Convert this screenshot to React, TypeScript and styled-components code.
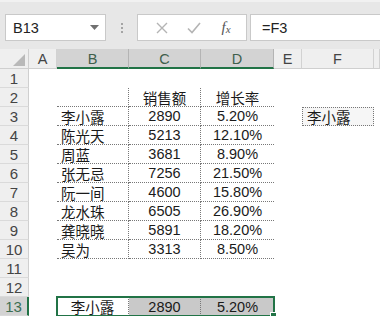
import React from "react";
import styled, { createGlobalStyle } from "styled-components";

const GlobalStyle = createGlobalStyle`
  html, body {
    margin: 0;
    padding: 0;
    background: #fff;
  }
  body {
    font-family: "Liberation Sans", "Noto Sans CJK SC", sans-serif;
    overflow: hidden;
  }
`;

type Cell = {
  text?: string;
  align?: "left" | "center";
  right?: boolean;
  bottom?: boolean;
  box?: boolean;
  shade?: boolean;
};

const names = ["李小露", "陈光天", "周蓝", "张无忌", "阮一间", "龙水珠", "龚晓晓", "吴为"];
const sales = ["2890", "5213", "3681", "7256", "4600", "6505", "5891", "3313"];
const rates = ["5.20%", "12.10%", "8.90%", "21.50%", "15.80%", "26.90%", "18.20%", "8.50%"];

const colLetters = ["A", "B", "C", "D", "E", "F", ""];
const selectedCols = ["B", "C", "D"];

const buildRows = (): Cell[][] => {
  const rows: Cell[][] = [];
  for (let r = 1; r <= 13; r++) {
    const row: Cell[] = colLetters.map(() => ({}));
    if (r === 2) {
      row[1] = { right: true, bottom: true };
      row[2] = { text: "销售额", align: "center", right: true, bottom: true };
      row[3] = { text: "增长率", align: "center", bottom: true };
    }
    if (r >= 3 && r <= 10) {
      const i = r - 3;
      row[1] = { text: names[i], align: "left", right: true, bottom: true };
      row[2] = { text: sales[i], align: "center", right: true, bottom: true };
      row[3] = { text: rates[i], align: "center", bottom: true };
    }
    if (r === 3) {
      row[5] = { text: "李小露", align: "left", box: true };
    }
    if (r === 13) {
      row[1] = { text: "李小露", align: "center", right: true };
      row[2] = { text: "2890", align: "center", right: true, shade: true };
      row[3] = { text: "5.20%", align: "center", shade: true };
    }
    rows.push(row);
  }
  return rows;
};

const App = () => {
  const rows = buildRows();

  return (
    <>
      <GlobalStyle />
      <Toolbar>
        <NameBox>
          <span>B13</span>
          <svg width="9" height="5" viewBox="0 0 9 5">
            <path d="M0 0 L9 0 L4.5 5 Z" fill="#707070" />
          </svg>
        </NameBox>
        <Grip>
          <Dot />
          <Dot />
          <Dot />
        </Grip>
        <FuncBox>
          <svg width="12" height="12" viewBox="0 0 12 12">
            <path d="M1 1 L11 11 M11 1 L1 11" stroke="#b4b4b4" strokeWidth="1.4" />
          </svg>
          <svg width="14" height="12" viewBox="0 0 14 12">
            <path d="M1 6.5 L5 10.5 L13 1" stroke="#b4b4b4" strokeWidth="1.6" fill="none" />
          </svg>
          <Fx>
            f<sub>x</sub>
          </Fx>
        </FuncBox>
        <FormulaBox>=F3</FormulaBox>
      </Toolbar>

      <Sheet>
        <Corner>
          <svg width="12" height="12" viewBox="0 0 12 12">
            <path d="M12 0 L12 12 L0 12 Z" fill="#b9b9b9" />
          </svg>
        </Corner>
        {colLetters.map((c, i) => (
          <ColHeader key={"h" + i} $selected={selectedCols.includes(c)}>
            {c}
          </ColHeader>
        ))}

        {rows.map((row, r) => (
          <React.Fragment key={r}>
            <RowHeader $selected={r === 12}>{r + 1}</RowHeader>
            {row.map((cell, c) => (
              <CellBox
                key={c}
                $align={cell.align || "left"}
                $right={!!cell.right}
                $bottom={!!cell.bottom}
                $box={!!cell.box}
                $shade={!!cell.shade}
              >
                {cell.text}
              </CellBox>
            ))}
          </React.Fragment>
        ))}

        <Selection>
          <FillHandle />
        </Selection>
      </Sheet>
    </>
  );
};

export default App;

const Toolbar = styled.div`
  display: flex;
  align-items: flex-start;
  height: 49px;
  box-sizing: border-box;
  padding-top: 12px;
  padding-left: 5px;
  background: #e7e7e7;
  border-top: 2px solid #f1f1f1;
`;

const NameBox = styled.div`
  width: 101px;
  height: 27px;
  box-sizing: border-box;
  border: 1px solid #c9c9c9;
  background: #fff;
  display: flex;
  align-items: center;
  justify-content: space-between;
  padding: 0 6px 0 7px;
  font-size: 14.5px;
  color: #222;
`;

const Grip = styled.div`
  width: 31px;
  height: 27px;
  display: flex;
  flex-direction: column;
  align-items: center;
  justify-content: center;
  gap: 2px;
`;

const Dot = styled.div`
  width: 2px;
  height: 2px;
  background: #a4a4a4;
`;

const FuncBox = styled.div`
  width: 110px;
  height: 27px;
  box-sizing: border-box;
  border: 1px solid #c9c9c9;
  background: #fff;
  display: grid;
  grid-template-columns: 1fr 1fr 1fr;
  align-items: center;
  justify-items: center;
  padding: 0 4px 0 8px;
`;

const Fx = styled.span`
  font-family: "Liberation Serif", serif;
  font-style: italic;
  font-size: 15px;
  color: #555;

  sub {
    font-size: 11px;
    vertical-align: -1px;
  }
`;

const FormulaBox = styled.div`
  flex: 1;
  margin-left: 3px;
  height: 27px;
  box-sizing: border-box;
  border: 1px solid #c9c9c9;
  border-right: none;
  background: #fff;
  display: flex;
  align-items: center;
  padding-left: 11px;
  font-size: 14.5px;
  color: #222;
`;

const Sheet = styled.div`
  position: relative;
  display: grid;
  grid-template-columns: 29px 28px 72px 72px 73px 28px 72px 1fr;
  grid-template-rows: 20px;
  grid-auto-rows: 19px;
  background: #fff;
`;

const Corner = styled.div`
  background: #efefef;
  border-right: 1px solid #cfcfcf;
  border-bottom: 1px solid #cfcfcf;
  box-sizing: border-box;
  display: flex;
  align-items: flex-end;
  justify-content: flex-end;
  padding: 0 3px 2px 0;
`;

const ColHeader = styled.div<{ $selected: boolean }>`
  box-sizing: border-box;
  background: ${(p) => (p.$selected ? "#d3d3d3" : "#efefef")};
  border-right: 1px solid ${(p) => (p.$selected ? "#b4b4b4" : "#d2d2d2")};
  border-bottom: ${(p) => (p.$selected ? "2px solid #217346" : "1px solid #cfcfcf")};
  color: ${(p) => (p.$selected ? "#3f5f4c" : "#444")};
  font-size: 14.5px;
  display: flex;
  align-items: center;
  justify-content: center;
  padding-top: 1px;
`;

const RowHeader = styled.div<{ $selected: boolean }>`
  box-sizing: border-box;
  background: ${(p) => (p.$selected ? "#d3d3d3" : "#efefef")};
  border-right: ${(p) => (p.$selected ? "2px solid #217346" : "1px solid #cfcfcf")};
  border-bottom: 1px solid #dadada;
  color: ${(p) => (p.$selected ? "#3c6e52" : "#444")};
  font-size: 15px;
  display: flex;
  align-items: center;
  justify-content: center;
`;

const CellBox = styled.div<{
  $align: "left" | "center";
  $right: boolean;
  $bottom: boolean;
  $box: boolean;
  $shade: boolean;
}>`
  box-sizing: border-box;
  display: flex;
  align-items: center;
  justify-content: ${(p) => (p.$align === "center" ? "center" : "flex-start")};
  padding-left: ${(p) => (p.$align === "left" ? "4px" : "0")};
  font-size: 14.5px;
  color: #1a1a1a;
  white-space: nowrap;
  background: ${(p) => (p.$shade ? "#c9c9c9" : p.$box ? "#f6f6f6" : "transparent")};
  border-right: ${(p) => (p.$right || p.$box ? "1px dotted #777" : "none")};
  border-bottom: ${(p) => (p.$bottom || p.$box ? "1px dotted #777" : "none")};
  border-left: ${(p) => (p.$box ? "1px dotted #777" : "none")};
  border-top: ${(p) => (p.$box ? "1px dotted #777" : "none")};
`;

const Selection = styled.div`
  position: absolute;
  left: 56px;
  top: 247px;
  width: 219px;
  height: 21px;
  box-sizing: border-box;
  border: 2px solid #217346;
  pointer-events: none;
`;

const FillHandle = styled.div`
  position: absolute;
  right: -4px;
  bottom: -4px;
  width: 5px;
  height: 5px;
  background: #217346;
  border: 1px solid #fff;
`;
